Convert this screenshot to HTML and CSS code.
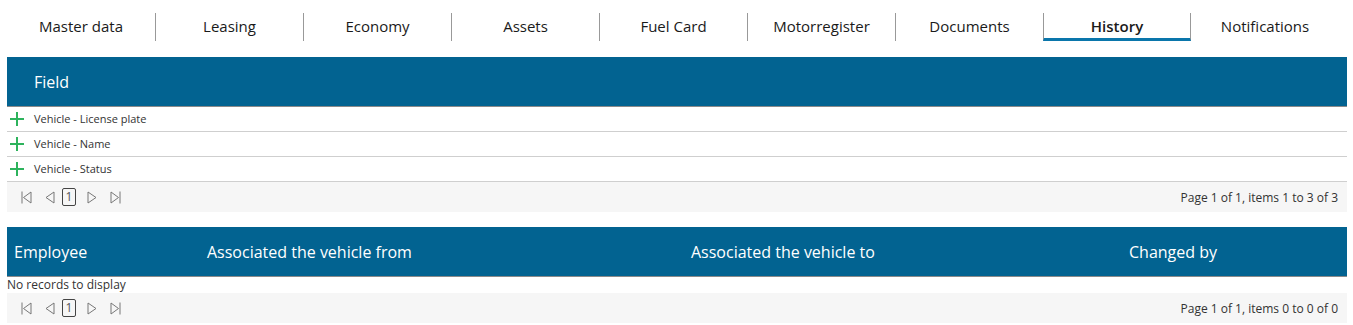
FILE: index.html
```html
<!DOCTYPE html>
<html lang="en">
<head>
  <meta charset="UTF-8">
  <title>Vehicle - History</title>
  <link rel="stylesheet" href="styles.css">
</head>
<body>
  <div class="tabs">
    <div class="tab">Master data</div>
    <div class="tab">Leasing</div>
    <div class="tab">Economy</div>
    <div class="tab">Assets</div>
    <div class="tab">Fuel Card</div>
    <div class="tab">Motorregister</div>
    <div class="tab">Documents</div>
    <div class="tab active">History</div>
    <div class="tab">Notifications</div>
  </div>

  <!-- Changed fields -->
  <div class="grid">
    <div class="grid-header">
      <div class="col field">Field</div>
    </div>
    <div class="row"><svg class="plus" width="14" height="14" viewBox="0 0 14 14"><path d="M7 0v14M0 7h14" stroke="#2db35c" stroke-width="2"/></svg>Vehicle - License plate</div>
    <div class="row"><svg class="plus" width="14" height="14" viewBox="0 0 14 14"><path d="M7 0v14M0 7h14" stroke="#2db35c" stroke-width="2"/></svg>Vehicle - Name</div>
    <div class="row"><svg class="plus" width="14" height="14" viewBox="0 0 14 14"><path d="M7 0v14M0 7h14" stroke="#2db35c" stroke-width="2"/></svg>Vehicle - Status</div>
    <div class="pager">
      <div class="pager-nav">
        <svg width="11" height="13" viewBox="0 0 11 13"><path d="M1 0.5v12M10 1L2.5 6.5L10 12Z" fill="none" stroke="#777" stroke-width="1"/></svg>
        <svg width="11" height="13" viewBox="0 0 11 13"><path d="M10 1L2 6.5L10 12Z" fill="none" stroke="#777" stroke-width="1"/></svg>
        <span class="page-num">1</span>
        <svg width="11" height="13" viewBox="0 0 11 13"><path d="M1 1L9 6.5L1 12Z" fill="none" stroke="#777" stroke-width="1"/></svg>
        <svg width="11" height="13" viewBox="0 0 11 13"><path d="M10 0.5v12M1 1L8.5 6.5L1 12Z" fill="none" stroke="#777" stroke-width="1"/></svg>
      </div>
      <div class="pager-info">Page 1 of 1, items 1 to 3 of 3</div>
    </div>
  </div>

  <!-- Employee associations -->
  <div class="grid second">
    <div class="grid-header">
      <div class="col c1">Employee</div>
      <div class="col c2">Associated the vehicle from</div>
      <div class="col c3">Associated the vehicle to</div>
      <div class="col c4">Changed by</div>
    </div>
    <div class="empty">No records to display</div>
    <div class="pager">
      <div class="pager-nav">
        <svg width="11" height="13" viewBox="0 0 11 13"><path d="M1 0.5v12M10 1L2.5 6.5L10 12Z" fill="none" stroke="#777" stroke-width="1"/></svg>
        <svg width="11" height="13" viewBox="0 0 11 13"><path d="M10 1L2 6.5L10 12Z" fill="none" stroke="#777" stroke-width="1"/></svg>
        <span class="page-num">1</span>
        <svg width="11" height="13" viewBox="0 0 11 13"><path d="M1 1L9 6.5L1 12Z" fill="none" stroke="#777" stroke-width="1"/></svg>
        <svg width="11" height="13" viewBox="0 0 11 13"><path d="M10 0.5v12M1 1L8.5 6.5L1 12Z" fill="none" stroke="#777" stroke-width="1"/></svg>
      </div>
      <div class="pager-info">Page 1 of 1, items 0 to 0 of 0</div>
    </div>
  </div>
</body>
</html>
```

FILE: styles.css
```css
body {
  margin: 0;
  padding: 13px 6px 0 7px;
  font-family: "Open Sans", Arial, sans-serif;
  color: #222;
  background: #fff;
}

.tabs {
  display: flex;
  height: 28px;
}

.tab {
  width: 148px;
  box-sizing: border-box;
  border-left: 1px solid #999;
  font-size: 15px;
  line-height: 26px;
  text-align: center;
  color: #1a1a1a;
}

.tab:first-child {
  border-left: none;
}

.tab.active {
  font-weight: 600;
  border-bottom: 3px solid #0a76ab;
  border-right: 1px solid #999;
}

.tab.active + .tab {
  border-left: none;
}

.grid {
  margin-top: 16px;
}

.grid.second {
  margin-top: 15px;
}

.grid-header {
  display: flex;
  height: 49px;
  align-items: center;
  background: #026391;
  border-bottom: 1px solid #8a8a8a;
  color: #fff;
  font-size: 16px;
}

.col.field {
  padding-left: 27px;
}

.col.c1 {
  width: 193px;
  padding-left: 7px;
}

.col.c2 {
  width: 484px;
}

.col.c3 {
  width: 438px;
}

.row {
  display: flex;
  align-items: center;
  box-sizing: border-box;
  height: 25px;
  padding-bottom: 1px;
  border-bottom: 1px solid #cfcfcf;
  font-size: 11px;
  color: #333;
}

.plus {
  display: block;
  margin: 0 10px 0 3px;
}

.empty {
  height: 16px;
  font-size: 12px;
  line-height: 16px;
  color: #333;
}

.pager {
  display: flex;
  justify-content: space-between;
  align-items: center;
  height: 30px;
  background: #f6f6f6;
  padding: 0 9px 0 14px;
}

.pager-nav {
  display: flex;
  align-items: center;
  gap: 12px;
}

.pager-nav svg {
  display: block;
}

.page-num {
  width: 12px;
  height: 16px;
  border: 1px solid #444;
  border-radius: 2px;
  font-size: 12px;
  line-height: 16px;
  text-align: center;
  color: #555;
  margin: 0 -1px 0 -5px;
}

.pager-info {
  font-size: 12px;
  color: #333;
}
```
